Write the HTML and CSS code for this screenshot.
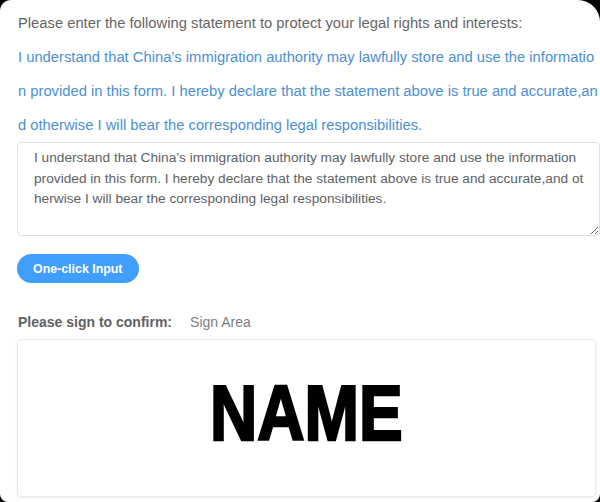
FILE: index.html
```html
<!DOCTYPE html>
<html lang="en">
<head>
<meta charset="utf-8">
<title>Statement</title>
<link rel="stylesheet" href="styles.css">
</head>
<body>
<div class="page">
  <p class="intro">Please enter the following statement to protect your legal rights and interests:</p>
  <p class="statement">I understand that China’s immigration authority may lawfully store and use the information provided in this form. I hereby declare that the statement above is true and accurate,and otherwise I will bear the corresponding legal responsibilities.</p>
  <textarea class="input" rows="4" readonly>I understand that China’s immigration authority may lawfully store and use the information provided in this form. I hereby declare that the statement above is true and accurate,and otherwise I will bear the corresponding legal responsibilities.</textarea>
  <button class="btn" type="button">One-click Input</button>
  <div class="sign-row">
    <span class="sign-label">Please sign to confirm:</span>
    <span class="sign-hint">Sign Area</span>
  </div>
  <div class="sign-box">
    <span class="name">NAME</span>
  </div>
</div>
</body>
</html>
```
FILE: styles.css
```css
html, body {
  margin: 0;
  padding: 0;
  background: #000;
}
.page {
  box-sizing: border-box;
  width: 600px;
  height: 502px;
  overflow: hidden;
  background: #fff;
  border-radius: 11px 22px 8px 8px;
  padding: 6px 1px 0 18px;
  font-family: "Liberation Sans", Arial, sans-serif;
}
.intro {
  margin: 0;
  font-size: 14.75px;
  line-height: 34px;
  color: #666;
}
.statement {
  margin: 0;
  font-size: 14.75px;
  line-height: 34px;
  color: #4c90d3;
  word-break: break-all;
}
.input {
  display: block;
  box-sizing: border-box;
  width: 583px;
  margin: 0 0 0 -1px;
  padding: 5px 14px 5px 16px;
  border: 1px solid #dcdfe6;
  border-radius: 4px;
  font-family: "Liberation Sans", Arial, sans-serif;
  font-size: 13.7px;
  line-height: 1.5;
  color: #606266;
  word-break: break-all;
  resize: vertical;
  outline: none;
  background: #fff;
}
.btn {
  display: block;
  margin: 18px 0 0 -1px;
  height: 29px;
  padding: 0 16px;
  border: none;
  border-radius: 15px;
  background: #409eff;
  color: #fff;
  font-family: "Liberation Sans", Arial, sans-serif;
  font-size: 12.4px;
  font-weight: bold;
}
.sign-row {
  display: flex;
  align-items: center;
  gap: 18px;
  margin-top: 29px;
  height: 20px;
  font-size: 14px;
}
.sign-label {
  font-weight: bold;
  color: #606266;
}
.sign-hint {
  color: #808080;
}
.sign-box {
  box-sizing: border-box;
  width: 579px;
  height: 158px;
  margin: 7px 0 0 -1px;
  border: 1px solid #e6e8ec;
  border-radius: 4px;
  box-shadow: 0 1px 3px rgba(0, 0, 0, 0.08);
  display: flex;
  align-items: center;
  justify-content: center;
  padding-bottom: 10px;
}
.name {
  display: inline-block;
  font-family: "Liberation Sans", Arial, sans-serif;
  font-weight: bold;
  font-size: 77px;
  line-height: 1;
  color: #000;
  -webkit-text-stroke: 2.5px #000;
  transform: scaleX(0.85);
}
```
